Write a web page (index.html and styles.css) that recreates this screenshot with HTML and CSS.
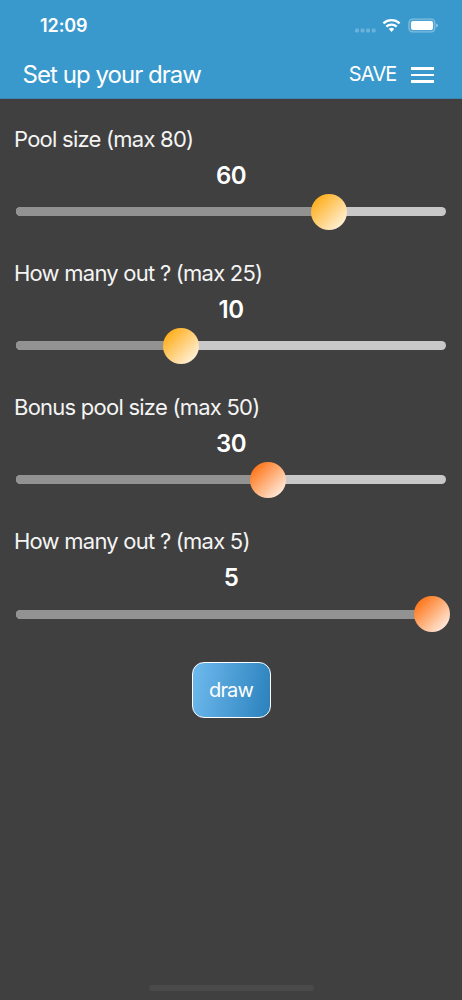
FILE: index.html
```html
<!DOCTYPE html>
<html lang="en">
<head>
<meta charset="utf-8">
<title>Set up your draw</title>
<link rel="stylesheet" href="styles.css">
</head>
<body>
<header class="header">
  <div class="status">
    <span class="time">12:09</span>
    <svg class="status-icons" width="84" height="16" viewBox="0 0 84 16">
      <g fill="#fff" fill-opacity=".25"><rect x="1" y="10.5" width="3.8" height="4" rx="1.3"/><rect x="6.6" y="10.5" width="3.8" height="4" rx="1.3"/><rect x="12.2" y="10.5" width="3.8" height="4" rx="1.3"/><rect x="17.8" y="10.5" width="3.8" height="4" rx="1.3"/></g>
      <g fill="none" stroke="#fff" stroke-width="2.3"><path d="M29.4 5.3a12 12 0 0 1 16.2 0"/><path d="M32.3 8.7a7.6 7.6 0 0 1 10.4 0"/></g>
      <path d="M37.5 13.9l-2.7-2.8a4 4 0 0 1 5.4 0z" fill="#fff"/>
      <rect x="54.9" y="1" width="26" height="13" rx="3.8" fill="#fff" fill-opacity=".1" stroke="#fff" stroke-opacity=".38" stroke-width="1.1"/>
      <rect x="57" y="3" width="22" height="9" rx="2" fill="#fff"/>
      <path d="M82.2 5.5q1.7.6 1.7 2t-1.7 2z" fill="#fff" fill-opacity=".45"/>
    </svg>
  </div>
  <div class="toolbar">
    <h1 class="title">Set up your draw</h1>
    <span class="save">SAVE</span>
    <span class="menu"><i></i><i></i><i></i></span>
  </div>
</header>
<main class="content">
  <section class="field">
    <div class="label">Pool size (max 80)</div>
    <div class="value">60</div>
    <div class="slider"><div class="fill" style="width:313px"></div><div class="thumb yellow" style="left:313px"></div></div>
  </section>
  <section class="field">
    <div class="label">How many out ? (max 25)</div>
    <div class="value">10</div>
    <div class="slider"><div class="fill" style="width:164.8px"></div><div class="thumb yellow" style="left:164.8px"></div></div>
  </section>
  <section class="field">
    <div class="label">Bonus pool size (max 50)</div>
    <div class="value">30</div>
    <div class="slider"><div class="fill" style="width:251.7px"></div><div class="thumb orange" style="left:251.7px"></div></div>
  </section>
  <section class="field">
    <div class="label">How many out ? (max 5)</div>
    <div class="value">5</div>
    <div class="slider"><div class="fill" style="width:415.5px"></div><div class="thumb orange" style="left:415.5px"></div></div>
  </section>
  <button class="draw">draw</button>
</main>
<div class="home"></div>
</body>
</html>
```
FILE: styles.css
```css
* { box-sizing: border-box; }
body {
  margin: 0;
  height: 1000px;
  display: flex;
  flex-direction: column;
  overflow: hidden;
  background: #404040;
  color: #fff;
  font-family: Inter, sans-serif;
}
.header {
  height: 98.5px;
  background: #3999cd;
  border-bottom: 1px solid #3b86b0;
}
.status {
  height: 51px;
  padding: 1px 24px 0 40px;
  display: flex;
  align-items: center;
  justify-content: space-between;
}
.time { font-size: 18px; font-weight: 600; line-height: 50px; letter-spacing: -.1px; }
.toolbar { height: 47px; display: flex; align-items: center; padding: 0 28px 0 22.5px; }
.title { margin: 0; font-size: 24px; font-weight: 400; line-height: 48px; letter-spacing: -.96px; flex: 1; }
.save { font-size: 20px; font-weight: 400; line-height: 24px; margin: -1px 14.5px 0 0; letter-spacing: -.85px; }
.menu { width: 23px; display: flex; flex-direction: column; gap: 4.3px; padding-top: 1px; }
.menu i { height: 2.2px; background: #fff; }
.content { flex: 1; padding: 22px 14px 0; display: flex; flex-direction: column; }
.field { height: 134.2px; }
.label { height: 36px; line-height: 36px; font-size: 22px; font-weight: 400; letter-spacing: -.76px; color: #f4f4f4; }
.value { height: 36px; line-height: 38px; text-align: center; font-size: 24px; font-weight: 600; letter-spacing: -.5px; }
.slider { position: relative; height: 9px; margin: 14.5px 2px 0; border-radius: 5px; background: #c8c8c8; }
.fill { height: 9px; border-radius: 5px 0 0 5px; background: #929292; }
.thumb { position: absolute; top: -13.5px; width: 36px; height: 36px; margin-left: -18px; border-radius: 50%; }
.yellow { background: linear-gradient(135deg, #ffab12 10%, #fff5e4 92%); }
.orange { background: linear-gradient(135deg, #ff7010 10%, #fff1e7 92%); }
.draw {
  align-self: center;
  width: 79px;
  height: 56px;
  margin-top: 4.5px;
  padding: 0;
  border: 1px solid #fff;
  border-radius: 12px;
  background: linear-gradient(100deg, #6ebaee, #2b81bc);
  color: #fff;
  font: 400 20px Inter, sans-serif;
  letter-spacing: -.9px;
}
.home { align-self: center; width: 165px; height: 6px; margin-bottom: 9px; border-radius: 3px; background: #4a4a4a; }
```
